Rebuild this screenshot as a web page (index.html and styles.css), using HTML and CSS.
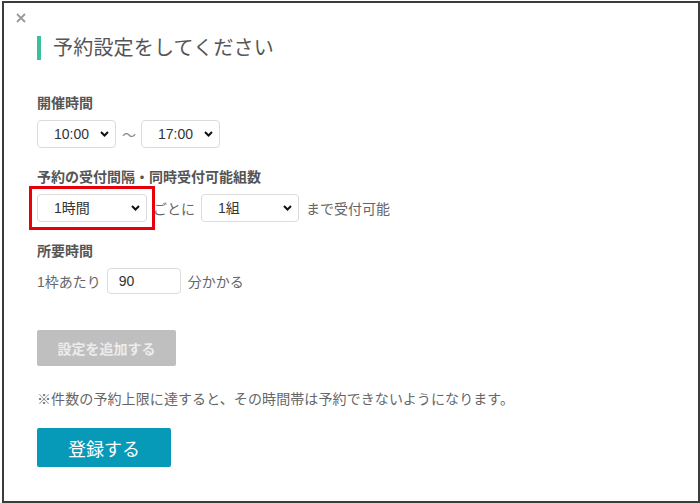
FILE: index.html
```html
<!DOCTYPE html>
<html lang="ja">
<head>
    <meta charset="UTF-8">
    <meta name="viewport" content="width=device-width, initial-scale=1.0">
    <title>予約設定</title>
    <link rel="stylesheet" href="styles.css">
</head>
<body>
    <div class="dialog">
        <span class="close">
            <svg width="10" height="10" viewBox="0 0 10 10"><path d="M1 1L9 9M9 1L1 9" stroke="#9a9a9a" stroke-width="1.8" fill="none"/></svg>
        </span>

        <h2 class="title">予約設定をしてください</h2>

        <div class="field">
            <p class="label">開催時間</p>
            <div class="row">
                <span class="sel w79">
                    <select><option>10:00</option></select>
                    <svg class="arrow" width="9" height="6" viewBox="0 0 9 6"><path d="M1 1L4.5 4.5L8 1" stroke="#111" stroke-width="2" fill="none"/></svg>
                </span>
                <span class="tilde">〜</span>
                <span class="sel w79">
                    <select><option>17:00</option></select>
                    <svg class="arrow" width="9" height="6" viewBox="0 0 9 6"><path d="M1 1L4.5 4.5L8 1" stroke="#111" stroke-width="2" fill="none"/></svg>
                </span>
            </div>
        </div>

        <div class="field">
            <p class="label">予約の受付間隔・同時受付可能組数</p>
            <div class="row">
                <span class="sel w110 marked">
                    <select><option>1時間</option></select>
                    <svg class="arrow" width="9" height="6" viewBox="0 0 9 6"><path d="M1 1L4.5 4.5L8 1" stroke="#111" stroke-width="2" fill="none"/></svg>
                </span>
                <span class="txt">ごとに</span>
                <span class="sel w98">
                    <select><option>1組</option></select>
                    <svg class="arrow" width="9" height="6" viewBox="0 0 9 6"><path d="M1 1L4.5 4.5L8 1" stroke="#111" stroke-width="2" fill="none"/></svg>
                </span>
                <span class="txt">まで受付可能</span>
            </div>
        </div>

        <div class="field">
            <p class="label">所要時間</p>
            <div class="row">
                <span class="txt first">1枠あたり</span>
                <input type="text" class="num" value="90">
                <span class="txt">分かかる</span>
            </div>
        </div>

        <button class="btn_add">設定を追加する</button>

        <p class="note">※件数の予約上限に達すると、その時間帯は予約できないようになります。</p>

        <button class="btn_save">登録する</button>
    </div>
</body>
</html>
```

FILE: styles.css
```css
* {
    margin: 0;
    padding: 0;
    box-sizing: border-box;
    font-family: "Liberation Sans", "Noto Sans CJK JP", sans-serif;
}

body {
    background: #fff;
}

.dialog {
    position: relative;
    margin: 1px 0 0 2px;
    width: 698px;
    height: 502px;
    border: 2px solid #3c3c3c;
    padding: 33px 0 0 33px;
    color: #555;
}

.close {
    position: absolute;
    left: 12px;
    top: 10px;
    line-height: 0;
}

.title {
    border-left: 4px solid #3cbf9b;
    padding-left: 12px;
    height: 24px;
    line-height: 24px;
    font-size: 20px;
    font-weight: normal;
    color: #555;
    letter-spacing: 0.2px;
}

.field {
    margin-top: 19px;
}

.field:first-of-type {
    margin-top: 33px;
}

.label {
    font-size: 14px;
    line-height: 20px;
    font-weight: bold;
    color: #555;
}

.row {
    display: flex;
    align-items: center;
    margin-top: 7px;
}

.sel {
    position: relative;
    display: inline-block;
    height: 28px;
}

.sel select {
    appearance: none;
    -webkit-appearance: none;
    width: 100%;
    height: 28px;
    border: 1px solid #dcdcdc;
    border-radius: 4px;
    background: #fff;
    padding-left: 16px;
    font-size: 14px;
    color: #333;
}

.sel .arrow {
    position: absolute;
    right: 7px;
    top: 11px;
    pointer-events: none;
}

.w79 { width: 79px; }
.w98 { width: 98px; }
.w110 { width: 110px; }

.marked {
    outline: 3px solid #e8000b;
    outline-offset: 5px;
}

.tilde {
    font-size: 14px;
    color: #888;
    margin: 0 5px 0 6px;
}

.txt {
    font-size: 14px;
    color: #666;
    margin: 0 8px 0 7px;
}

.w110 + .txt {
    margin: 0 6px 0 6px;
}

.txt.first {
    margin: 0 6px 0 0;
}

.num {
    width: 74px;
    height: 26px;
    border: 1px solid #dcdcdc;
    border-radius: 4px;
    padding-left: 11px;
    font-size: 14px;
    color: #333;
}

.btn_add {
    display: block;
    margin-top: 36px;
    width: 139px;
    height: 36px;
    border: none;
    border-radius: 2px;
    background: #bfbfbf;
    color: #ececec;
    font-size: 14px;
    font-weight: bold;
}

.note {
    margin-top: 23px;
    font-size: 14px;
    line-height: 20px;
    color: #666;
    letter-spacing: 0.1px;
}

.btn_save {
    display: block;
    margin-top: 19px;
    width: 134px;
    height: 39px;
    border: none;
    border-radius: 2px;
    background: #0799b8;
    color: #fff;
    font-size: 18px;
}
```
